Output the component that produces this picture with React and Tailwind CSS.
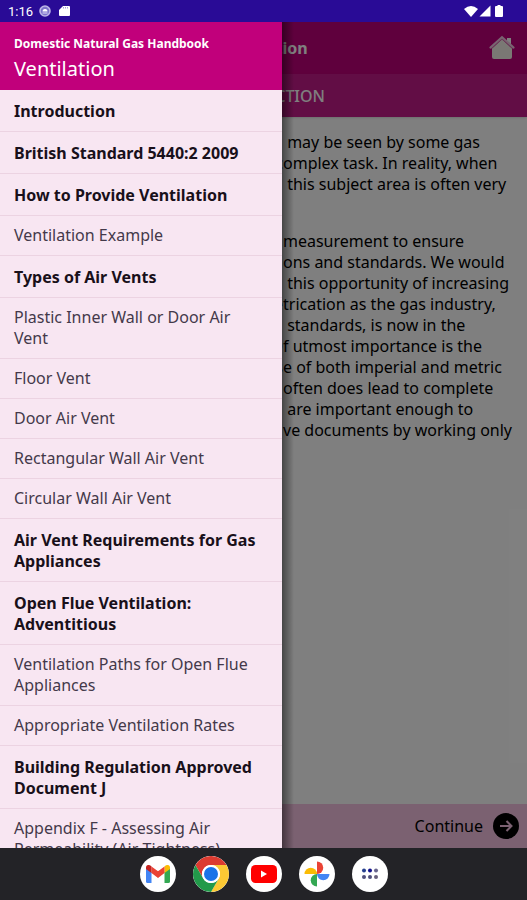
import clsx from 'clsx';

const topics = [
  { title: 'Introduction', main: true },
  { title: 'British Standard 5440:2 2009', main: true },
  { title: 'How to Provide Ventilation', main: true },
  { title: 'Ventilation Example' },
  { title: 'Types of Air Vents', main: true },
  { title: 'Plastic Inner Wall or Door Air Vent' },
  { title: 'Floor Vent' },
  { title: 'Door Air Vent' },
  { title: 'Rectangular Wall Air Vent' },
  { title: 'Circular Wall Air Vent' },
  { title: 'Air Vent Requirements for Gas Appliances', main: true },
  { title: 'Open Flue Ventilation: Adventitious', main: true },
  { title: 'Ventilation Paths for Open Flue Appliances' },
  { title: 'Appropriate Ventilation Rates' },
  { title: 'Building Regulation Approved Document J', main: true },
  { title: 'Appendix F - Assessing Air Permeability (Air Tightness)' },
];

// [part under the drawer, part beside it]
const paragraphs = [
  [
    ['', ' may be seen by some gas'],
    ['c', 'omplex task. In reality, when'],
    ['', ' this subject area is often very'],
  ],
  [
    ['', 'measurement to ensure'],
    ['regulati', 'ons and standards. We would'],
    ['', ' this opportunity of increasing'],
    ['me', 'trication as the gas industry,'],
    ['', ' standards, is now in the'],
    ['O', 'f utmost importance is the'],
    ['us', 'e of both imperial and metric'],
    ['', 'often does lead to complete'],
    ['', ' are important enough to'],
    ['legislati', 've documents by working only'],
  ],
];

function StatusBar() {
  return (
    <div className="flex h-[22px] shrink-0 items-center justify-between bg-[#290b96] pr-6 pl-2 text-white">
      <div className="flex items-center gap-[6px]">
        <span className="font-[Roboto] text-[13px] leading-none">1:16</span>
        <svg width="12" height="12" viewBox="0 0 12 12">
          <circle cx="6" cy="6" r="5" fill="#7d72cb" stroke="#bdb6e6" strokeWidth="1.6" />
          <path d="M3.500 6.500a2.500 2.500 0 0 1 5 0z" fill="#fff" />
          <path d="M3.500 8h5" stroke="#e4e0f6" />
        </svg>
        <svg className="ml-[2px]" width="11" height="12" viewBox="0 0 11 12">
          <path d="M4 1h6q1 0 1 1v8q0 1-1 1H1q-1 0-1-1V5z" fill="#fff" />
          <path d="M4.500 2v1.500M6.500 2v1.500M8.500 2v1.500" stroke="#8d83d0" strokeWidth=".8" />
        </svg>
      </div>
      <div className="flex items-center">
        <svg width="14" height="12" viewBox="0 0 14 12" fill="#fff">
          <path d="M0 4Q7-2 14 4L7 12z" />
        </svg>
        <svg className="ml-px" width="12" height="12" viewBox="0 0 12 12" fill="#fff">
          <path d="M11.500.5v11H.5z" />
        </svg>
        <svg className="ml-1" width="8" height="12" viewBox="0 0 8 12" fill="#fff">
          <path d="M2.500 0h3v1H7q1 0 1 1v9q0 1-1 1H1q-1 0-1-1V2q0-1 1-1h1.500z" />
        </svg>
      </div>
    </div>
  );
}

function HomeIcon() {
  return (
    <svg width="26" height="26" viewBox="0 0 26 26">
      <path d="M18 3h4v8l-4-3.500z" fill="#fff" />
      <path d="M13 4l10 9.500V22q0 2-2 2H5q-2 0-2-2v-8.500z" fill="#f4f0e8" />
      <path d="M2.500 13.500L13 4.200l10.500 9.300" fill="none" stroke="#d565ab" strokeWidth="1" />
      <path d="M1.500 12.500L13 2.200l11.500 10.300" fill="none" stroke="#f3c9e3" strokeWidth="2.200" strokeLinecap="round" />
    </svg>
  );
}

function Drawer() {
  return (
    <aside className="absolute inset-y-0 left-0 flex w-[282px] flex-col overflow-hidden bg-[#f8e6f2]">
      <header className="flex h-[68px] shrink-0 flex-col bg-[#c1007b] px-[14px] pt-3 text-white">
        <p className="text-[12px] leading-5 font-bold">Domestic Natural Gas Handbook</p>
        <h2 className="text-xl leading-[30px]">Ventilation</h2>
      </header>
      <nav className="min-h-0 flex-1 overflow-hidden">
        {topics.map((topic) => (
          <a
            key={topic.title}
            href="#"
            className={clsx(
              'block border-b border-[#ecd3e2] pr-6 pl-[14px] text-base leading-[21px]',
              topic.main ? 'pt-[11px] pb-[9px] font-bold text-[#19101a]' : 'py-[9px] text-[#44394a]'
            )}
          >
            {topic.title}
          </a>
        ))}
      </nav>
    </aside>
  );
}

function GmailIcon() {
  return (
    <svg width="24" height="18" viewBox="0 0 24 18">
      <path d="M0 3v13.400Q0 18 1.600 18H5.500V7z" fill="#4285f4" />
      <path d="M24 3v13.400Q24 18 22.400 18H18.500V7z" fill="#34a853" />
      <path d="M18.500 1.500V8L24 4V2.500C24 .2 21.400-.8 19.600.6z" fill="#fbbc04" />
      <path d="M5.500 8V1.400L12 6.300l6.500-4.900V8L12 13z" fill="#ea4335" />
      <path d="M0 2.500V4l5.500 4V1.500L4.400.6C2.600-.8 0 .2 0 2.500z" fill="#c5221f" />
    </svg>
  );
}

function ChromeIcon() {
  return (
    <svg width="36" height="36" viewBox="0 0 36 36">
      <path d="M2.400 9A18 18 0 0 1 33.600 9H18a9 9 0 0 0-7.800 13.500z" fill="#dc3b30" />
      <path d="M33.600 9A18 18 0 0 1 18 36l7.800-13.500A9 9 0 0 0 18 9z" fill="#fcc934" />
      <path d="M2.400 9A18 18 0 0 0 18 36l7.800-13.500a9 9 0 0 1-15.600 0z" fill="#229a4a" />
      <circle cx="18" cy="18" r="9" fill="#fff" />
      <circle cx="18" cy="18" r="7" fill="#1a73e8" />
    </svg>
  );
}

function YoutubeIcon() {
  return (
    <svg width="26" height="18" viewBox="0 0 26 18">
      <rect width="26" height="18" rx="4.500" fill="#f00" />
      <path d="M10 5.500v7L16 9z" fill="#fff" />
    </svg>
  );
}

function PhotosIcon() {
  return (
    <svg width="26" height="26" viewBox="0 0 26 26">
      <path d="M13 0.500a6.200 6.200 0 0 1 0 12.500z" fill="#ea4335" />
      <path d="M25.500 13a6.200 6.200 0 0 1-12.500 0z" fill="#4285f4" />
      <path d="M13 25.500a6.200 6.200 0 0 1 0-12.500z" fill="#34a853" />
      <path d="M0.500 13a6.200 6.200 0 0 1 12.500 0z" fill="#fbbc04" />
    </svg>
  );
}

function AppsIcon() {
  return (
    <svg width="18" height="12" viewBox="0 0 18 12">
      <circle cx="3" cy="2.500" r="2" fill="#26418f" />
      <circle cx="9" cy="2.500" r="2" fill="#12128c" />
      <circle cx="15" cy="2.500" r="2" fill="#68658c" />
      <circle cx="3" cy="9" r="2" fill="#50507c" />
      <circle cx="9" cy="9" r="2" fill="#50507c" />
      <circle cx="15" cy="9" r="2" fill="#68607c" />
    </svg>
  );
}

const dockApps = [
  { name: 'Gmail', Icon: GmailIcon },
  { name: 'Chrome', Icon: ChromeIcon },
  { name: 'YouTube', Icon: YoutubeIcon },
  { name: 'Photos', Icon: PhotosIcon },
  { name: 'All apps', Icon: AppsIcon },
];

function Dock() {
  return (
    <footer className="flex h-[52px] shrink-0 items-center justify-center gap-[17px] bg-[#232327]">
      {dockApps.map(({ name, Icon }) => (
        <button
          key={name}
          type="button"
          aria-label={name}
          className="flex size-9 items-center justify-center overflow-hidden rounded-full bg-white"
        >
          <Icon />
        </button>
      ))}
    </footer>
  );
}

export default function App() {
  return (
    <div className="flex h-screen flex-col overflow-hidden font-['Noto_Sans','Open_Sans',sans-serif]">
      <StatusBar />

      <div className="relative flex min-h-0 flex-1 flex-col overflow-hidden bg-white">
        <header className="grid h-[52px] shrink-0 grid-cols-[1fr_auto_1fr] items-center bg-[#bf007a] px-3 text-white">
          <h1 className="col-start-2 text-base font-bold">Ventilation</h1>
          <button type="button" aria-label="Home" className="justify-self-end">
            <HomeIcon />
          </button>
        </header>
        <div className="flex h-[43px] shrink-0 items-center justify-center bg-[#c41a8a] text-base font-medium text-white shadow">
          INTRODUCTION
        </div>

        <main className="flex-1 pt-[15px] text-base leading-[21px] text-black">
          {paragraphs.map((lines, i) => (
            <p key={i} className="mb-9">
              {lines.map(([under, beside]) => (
                <span key={beside} className="grid grid-cols-[283px_1fr] whitespace-pre">
                  <span className="text-right">{under}</span>
                  <span>{beside}</span>
                </span>
              ))}
            </p>
          ))}
        </main>

        <div className="flex h-11 shrink-0 items-center justify-end bg-[#f6c3e2] px-2">
          <button type="button" className="flex items-center gap-[10px] text-base text-black">
            Continue
            <svg width="26" height="26" viewBox="0 0 26 26" fill="none">
              <circle cx="13" cy="13" r="13" fill="#000" />
              <path d="M7 13h11M13.500 8l5 5-5 5" stroke="#f6c3e2" strokeWidth="2" />
            </svg>
          </button>
        </div>

        <div className="absolute inset-0 bg-black/50" />
        <div className="absolute inset-y-0 left-[282px] w-3 bg-linear-to-r from-black/45 to-transparent" />
        <Drawer />
      </div>

      <Dock />
    </div>
  );
}
